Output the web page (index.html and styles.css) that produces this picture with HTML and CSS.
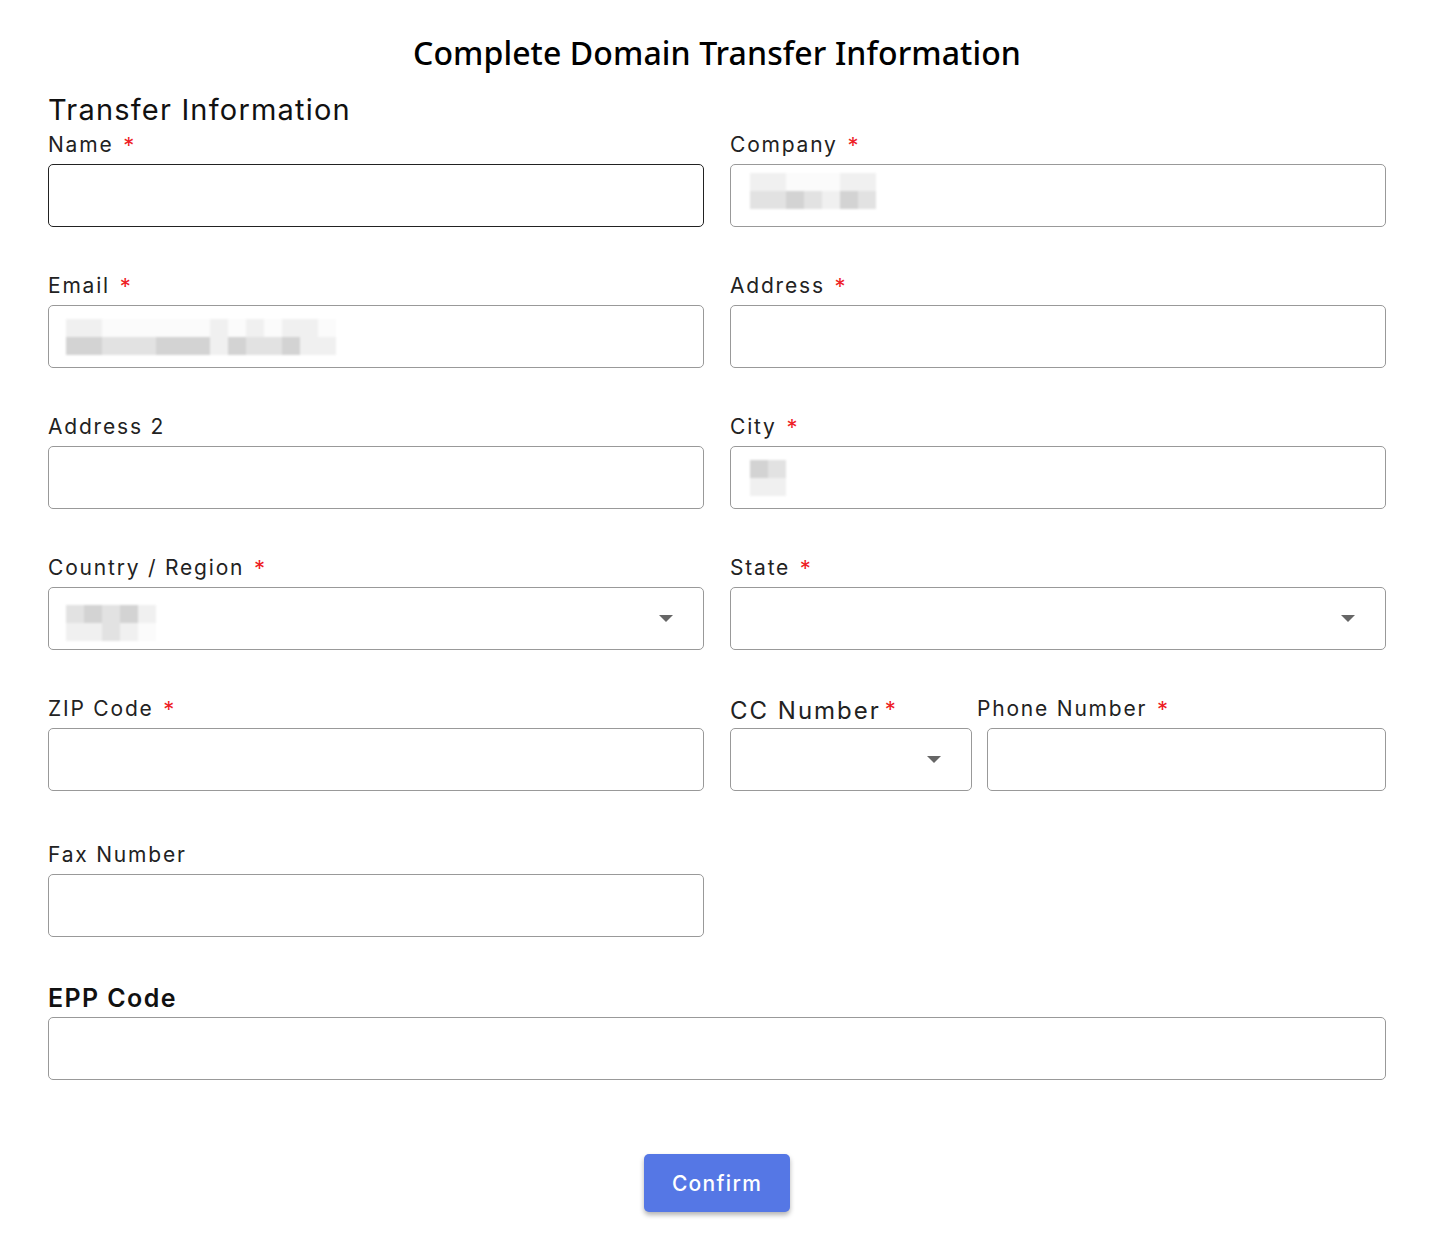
FILE: index.html
```html
<!DOCTYPE html>
<html lang="en">
<head>
    <meta charset="UTF-8">
    <meta name="viewport" content="width=device-width, initial-scale=1.0">
    <title>Complete Domain Transfer Information</title>
    <link rel="stylesheet" href="styles.css">
</head>
<body>
    <main class="page">
        <h1 class="page-title">Complete Domain Transfer Information</h1>
        <h2 class="section-title">Transfer Information</h2>

        <div class="form-grid">
            <!-- Name -->
            <div class="form-field">
                <label>Name <span class="req">*</span></label>
                <div class="input-box focused"></div>
            </div>
            <!-- Company -->
            <div class="form-field">
                <label>Company <span class="req">*</span></label>
                <div class="input-box">
                    <div class="mosaic company">
                        <div class="mosaic-row">
                            <i class="c1"></i><i class="c1"></i><i class="c0"></i><i class="c0"></i><i class="c0"></i><i class="c1"></i><i class="c1"></i>
                        </div>
                        <div class="mosaic-row">
                            <i class="c2"></i><i class="c2"></i><i class="c3"></i><i class="c2"></i><i class="c1"></i><i class="c3"></i><i class="c2"></i>
                        </div>
                    </div>
                </div>
            </div>
            <!-- Email -->
            <div class="form-field">
                <label>Email <span class="req">*</span></label>
                <div class="input-box">
                    <div class="mosaic email">
                        <div class="mosaic-row">
                            <i class="c1"></i><i class="c1"></i><i class="c0"></i><i class="c0"></i><i class="c0"></i><i class="c0"></i><i class="c0"></i><i class="c0"></i><i class="c1"></i><i class="c0"></i><i class="c1"></i><i class="c0"></i><i class="c1"></i><i class="c1"></i><i class="c0"></i>
                        </div>
                        <div class="mosaic-row">
                            <i class="c3"></i><i class="c3"></i><i class="c2"></i><i class="c2"></i><i class="c2"></i><i class="c3"></i><i class="c3"></i><i class="c3"></i><i class="c1"></i><i class="c3"></i><i class="c2"></i><i class="c2"></i><i class="c3"></i><i class="c1"></i><i class="c1"></i>
                        </div>
                    </div>
                </div>
            </div>
            <!-- Address -->
            <div class="form-field">
                <label>Address <span class="req">*</span></label>
                <div class="input-box"></div>
            </div>
            <!-- Address 2 -->
            <div class="form-field">
                <label>Address 2</label>
                <div class="input-box"></div>
            </div>
            <!-- City -->
            <div class="form-field">
                <label>City <span class="req">*</span></label>
                <div class="input-box">
                    <div class="mosaic city">
                        <div class="mosaic-row"><i class="c3"></i><i class="c2"></i></div>
                        <div class="mosaic-row"><i class="c1"></i><i class="c1"></i></div>
                    </div>
                </div>
            </div>
            <!-- Country -->
            <div class="form-field">
                <label>Country / Region <span class="req">*</span></label>
                <div class="input-box select">
                    <div class="mosaic country">
                        <div class="mosaic-row"><i class="c2"></i><i class="c3"></i><i class="c2"></i><i class="c3"></i><i class="c1"></i></div>
                        <div class="mosaic-row"><i class="c1"></i><i class="c1"></i><i class="c2"></i><i class="c1"></i><i class="c0"></i></div>
                    </div>
                    <span class="arrow"></span>
                </div>
            </div>
            <!-- State -->
            <div class="form-field">
                <label>State <span class="req">*</span></label>
                <div class="input-box select">
                    <span></span>
                    <span class="arrow"></span>
                </div>
            </div>
            <!-- ZIP -->
            <div class="form-field">
                <label>ZIP Code <span class="req">*</span></label>
                <div class="input-box"></div>
            </div>
            <!-- Phone -->
            <div class="phone-row">
                <div class="form-field cc">
                    <label class="cc-label">CC Number<span class="req">*</span></label>
                    <div class="input-box select">
                        <span></span>
                        <span class="arrow"></span>
                    </div>
                </div>
                <div class="form-field phone">
                    <label class="phone-label">Phone Number <span class="req">*</span></label>
                    <div class="input-box"></div>
                </div>
            </div>
            <!-- Fax -->
            <div class="form-field fax">
                <label>Fax Number</label>
                <div class="input-box"></div>
            </div>
        </div>

        <div class="form-field epp">
            <label>EPP Code</label>
            <div class="input-box"></div>
        </div>

        <div class="actions">
            <button class="confirm-btn">Confirm</button>
        </div>
    </main>
</body>
</html>
```

FILE: styles.css
```css
/* Basic Reset */
* {
    margin: 0;
    padding: 0;
    box-sizing: border-box;
}

body {
    font-family: Inter, "Noto Sans", sans-serif;
    background-color: #fff;
    color: #1f1f1f;
}

.page {
    padding: 30px 46px 40px 48px;
}

/* Headings */
.page-title {
    font-family: "Noto Sans", sans-serif;
    font-size: 32px;
    font-weight: 500;
    line-height: 46px;
    letter-spacing: 0.1px;
    text-align: center;
    color: #000;
}

.section-title {
    font-size: 29px;
    font-weight: 400;
    line-height: 38px;
    letter-spacing: 1.2px;
    margin-top: 15px;
    margin-bottom: 2px;
    color: #111;
}

/* Form Grid */
.form-grid {
    display: grid;
    grid-template-columns: 1fr 1fr;
    column-gap: 26px;
    row-gap: 45px;
}

.form-field {
    display: flex;
    flex-direction: column;
}

.form-field label {
    font-size: 21px;
    line-height: 28px;
    height: 28px;
    margin-bottom: 5px;
    color: #222;
    letter-spacing: 1.8px;
    white-space: nowrap;
}

.req {
    display: inline-block;
    color: #ee1c24;
    font-size: 22px;
    line-height: 1;
    vertical-align: top;
    margin-top: 3px;
    margin-left: 2px;
    letter-spacing: 0;
}

.input-box {
    height: 63px;
    border: 1px solid #999;
    border-radius: 5px;
    background: #fff;
    padding: 0 17px;
    display: flex;
    align-items: center;
}

.input-box.focused {
    border-color: #222;
}

/* Select boxes */
.input-box.select {
    justify-content: space-between;
    padding-right: 30px;
}

.arrow {
    width: 0;
    height: 0;
    border-left: 7px solid transparent;
    border-right: 7px solid transparent;
    border-top: 7px solid #666;
}

/* Phone row: CC Number + Phone Number */
.phone-row {
    display: grid;
    grid-template-columns: 242px 1fr;
    column-gap: 15px;
}

.form-field .cc-label {
    font-size: 24px;
    letter-spacing: 2px;
    padding-top: 2px;
}

.cc-label .req {
    margin-left: 4px;
    margin-top: 1px;
}

.phone-label {
    margin-left: -10px;
}

.fax {
    margin-top: 5px;
}

/* EPP Code */
.epp {
    margin-top: 47px;
}

.form-field.epp label {
    font-size: 25px;
    font-weight: 600;
    letter-spacing: 1.4px;
    color: #111;
}

/* Blurred placeholders */
.mosaic {
    display: flex;
    flex-direction: column;
    filter: blur(1px);
}

.mosaic-row {
    display: flex;
}

.mosaic i {
    display: block;
    width: 18px;
    height: 18px;
}

.mosaic .c0 { background: #fbfbfb; }
.mosaic .c1 { background: #f0f0f0; }
.mosaic .c2 { background: #e2e2e2; }
.mosaic .c3 { background: #d3d3d3; }

.company {
    margin-left: 2px;
    margin-bottom: 10px;
}

.city {
    margin-left: 2px;
}

.country {
    margin-top: 4px;
    height: 32px;
}

/* Button */
.actions {
    display: flex;
    justify-content: center;
    margin-top: 74px;
}

.confirm-btn {
    font-family: Inter, "Noto Sans", sans-serif;
    width: 146px;
    height: 58px;
    background-color: #5577e5;
    color: #fff;
    font-size: 21px;
    font-weight: 500;
    letter-spacing: 1.3px;
    border: none;
    border-radius: 5px;
    box-shadow: 0 3px 5px rgba(0, 0, 0, 0.3);
    cursor: pointer;
}
```
